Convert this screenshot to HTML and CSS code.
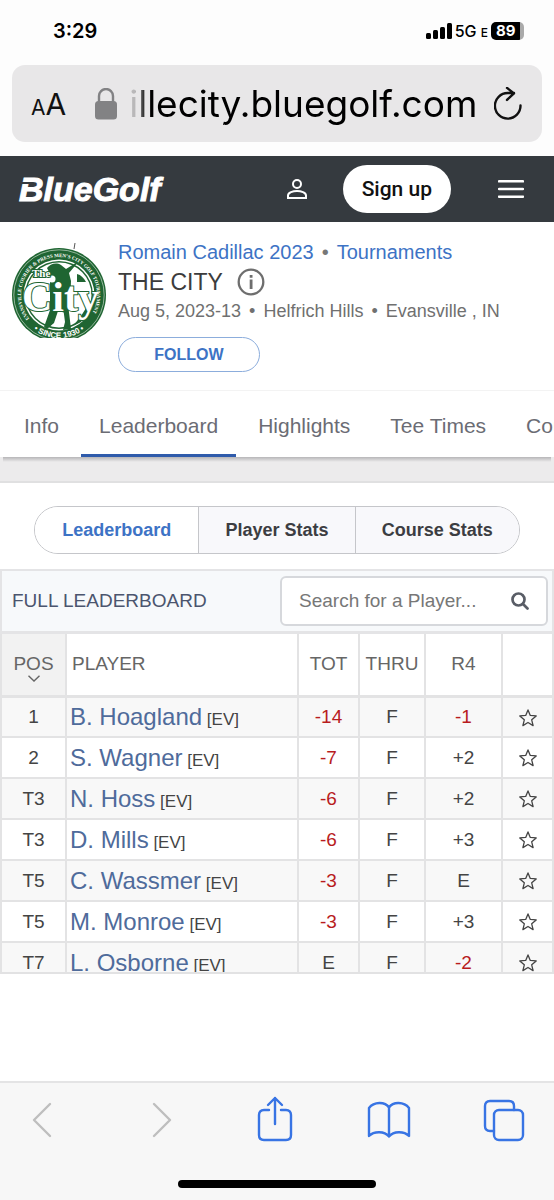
FILE: index.html
```html
<!DOCTYPE html>
<html lang="en">
<head>
<meta charset="utf-8">
<meta name="viewport" content="width=device-width, initial-scale=1">
<title>The City - Leaderboard</title>
<link rel="stylesheet" href="styles.css">
</head>
<body>
<div class="status-bar">
  <time class="clock">3:29</time>
  <div class="status-right">
    <svg class="signal" width="26" height="16" viewBox="0 0 26 16" aria-hidden="true">
      <rect x="0" y="10" width="5" height="6" rx="1.5"/><rect x="7" y="7" width="5" height="9" rx="1.5"/><rect x="14" y="4" width="5" height="12" rx="1.5"/><rect x="21" y="0" width="5" height="16" rx="1.5"/>
    </svg>
    <span class="network">5G <small>E</small></span>
    <span class="battery">89</span>
  </div>
</div>

<form class="address-bar">
  <button class="text-size" type="button" aria-label="Text size"><small>A</small>A</button>
  <svg class="lock" width="22" height="32" viewBox="0 0 22 32" aria-hidden="true">
    <path d="M4 14V8a7 7 0 0 1 14 0v6" fill="none" stroke="#828284" stroke-width="2.4"/>
    <rect x="0" y="13" width="22" height="18.500" rx="3.500" fill="#828284"/>
  </svg>
  <input class="url" type="text" value="illecity.bluegolf.com" aria-label="Address">
  <button class="reload" type="button" aria-label="Reload">
    <svg width="28" height="34" viewBox="0 0 28 34" fill="none" stroke="#111" stroke-width="2.400" stroke-linecap="round" stroke-linejoin="round">
      <path d="M26.500 18.500A12.800 12.800 0 1 1 13.700 6H20M13 .9l7 5.500-7 6.500"/>
    </svg>
  </button>
</form>

<header class="site-header">
  <a class="brand" href="#">BlueGolf</a>
  <button class="icon-button account" type="button" aria-label="Account">
    <svg width="20" height="20" viewBox="0 0 20 20" fill="none" stroke="#fff" stroke-width="2">
      <circle cx="10" cy="5" r="4"/><path d="M1 19v-2.500c0-3 5-4.500 9-4.500s9 1.500 9 4.500V19z"/>
    </svg>
  </button>
  <button class="sign-up" type="button">Sign up</button>
  <button class="icon-button" type="button" aria-label="Menu">
    <svg width="26" height="18" viewBox="0 0 26 18"><path d="M1 1.300h24M1 9h24M1 16.700h24" stroke="#fff" stroke-width="2.500" stroke-linecap="round"/></svg>
  </button>
</header>

<section class="event">
  <svg class="event-logo" width="96" height="96" viewBox="0 0 96 96" role="img" aria-label="The City tournament logo">
    <defs>
      <clipPath id="crop"><rect width="96" height="95"/></clipPath>
      <path id="ring" d="M21 78.700A38 38 0 1 1 75 78.700"/>
      <path id="foot" d="M17.200 82A43 43 0 0 0 78.800 82"/>
    </defs>
    <g clip-path="url(#crop)">
      <path d="M63 6l1-6" stroke="#555" stroke-width="1"/>
      <circle cx="48" cy="52" r="47" fill="#1f6532"/>
      <circle cx="48" cy="52" r="45.200" fill="none" stroke="#c5d9c9" stroke-width=".7"/>
      <circle cx="48" cy="52" r="35.500" fill="#fff"/>
      <circle cx="48" cy="52" r="34" fill="#1f6532"/>
      <circle cx="48" cy="52" r="32.500" fill="#fff"/>
      <path d="M36 25c3-4 9-6 14-3l5 4 13-8-10 12 2 8-1 24-4 8-8-2-4 12-7 6-3-2 6-17V31z" fill="#1f6532"/>
      <path d="M52 64l5-3 3 25-8 1 2-8z" fill="#1f6532"/>
      <path d="M66 31c4 1 7 4 9 8h-9zM70 73l7-11 1 5-8 12-8 4z" fill="#1f6532"/>
      <circle cx="41" cy="36" r="3.500" fill="#fff"/>
      <g class="logo-word"><text x="11" y="68" class="logo-city">City</text><text x="21" y="34" class="logo-the">The</text></g>
      <text class="logo-ring"><textPath href="#ring" startOffset="4">EVANSVILLE COURIER &amp; PRESS MEN’S CITY GOLF TOURNAMENT</textPath></text>
      <text class="logo-foot" text-anchor="middle"><textPath href="#foot" startOffset="50%">• SINCE 1930 •</textPath></text>
    </g>
  </svg>
  <div class="event-info">
    <nav class="crumbs"><a href="#">Romain Cadillac 2023</a><span class="dot">•</span><a href="#">Tournaments</a></nav>
    <div class="event-title">
      <h1>THE CITY</h1>
      <button class="icon-button" type="button" aria-label="Event information">
        <svg width="28" height="28" viewBox="0 0 28 28"><circle cx="14" cy="14" r="12.300" fill="none" stroke="#6e6e6e" stroke-width="2.300"/><path d="M12.700 11.500h2.800V21h-2.800zM12.700 7h2.800v2.800h-2.800z" fill="#6e6e6e"/></svg>
      </button>
    </div>
    <p class="event-meta"><span>Aug 5, 2023-13</span><span class="dot">•</span><span>Helfrich Hills</span><span class="dot">•</span><span>Evansville , IN</span></p>
    <button class="follow" type="button">FOLLOW</button>
  </div>
</section>

<nav class="tabs">
  <a href="#">Info</a>
  <a href="#" class="active" aria-current="page">Leaderboard</a>
  <a href="#">Highlights</a>
  <a href="#">Tee Times</a>
  <a href="#">Course</a>
</nav>
<div class="band"></div>

<main>
  <div class="segments">
    <button type="button" class="selected" aria-pressed="true">Leaderboard</button>
    <button type="button">Player Stats</button>
    <button type="button">Course Stats</button>
  </div>

  <div class="board-head">
    <h2>FULL LEADERBOARD</h2>
    <form class="search">
      <input type="search" placeholder="Search for a Player..." aria-label="Search for a player">
      <button class="icon-button" type="button" aria-label="Search">
        <svg width="18" height="18" viewBox="0 0 18 18" fill="none" stroke="#595d66" stroke-width="2.700" stroke-linecap="round"><circle cx="7.500" cy="7.500" r="6"/><path d="M12 12l4.500 4.500"/></svg>
      </button>
    </form>
  </div>

  <div class="board">
    <svg class="sprite" aria-hidden="true"><symbol id="star" viewBox="0 0 18 18"><path d="M9 .9l2.300 5.500 5.900.5-4.500 3.900 1.400 5.800L9 13.500l-5.100 3.100 1.400-5.800L.8 6.900l5.900-.5z" fill="none" stroke="#444" stroke-width="1.300" stroke-linejoin="round"/></symbol></svg>
    <table>
      <colgroup><col class="c-pos"><col><col class="c-tot"><col class="c-thru"><col class="c-round"><col class="c-star"></colgroup>
      <thead>
        <tr>
          <th class="sorted" scope="col">POS<svg width="12" height="7" viewBox="0 0 12 7" fill="none" stroke="#666" stroke-width="1.400"><path d="M.5.700L6 6 11.500.700"/></svg></th>
          <th class="name" scope="col">PLAYER</th><th scope="col">TOT</th><th scope="col">THRU</th><th scope="col">R4</th><th scope="col" aria-label="Favorite"></th>
        </tr>
      </thead>
      <tbody>
        <tr><td>1</td><td class="name"><a href="#">B. Hoagland</a> [EV]</td><td class="under">-14</td><td>F</td><td class="under">-1</td><td><button class="icon-button" type="button" aria-label="Follow B. Hoagland"><svg width="18" height="18"><use href="#star"/></svg></button></td></tr>
        <tr><td>2</td><td class="name"><a href="#">S. Wagner</a> [EV]</td><td class="under">-7</td><td>F</td><td>+2</td><td><button class="icon-button" type="button" aria-label="Follow S. Wagner"><svg width="18" height="18"><use href="#star"/></svg></button></td></tr>
        <tr><td>T3</td><td class="name"><a href="#">N. Hoss</a> [EV]</td><td class="under">-6</td><td>F</td><td>+2</td><td><button class="icon-button" type="button" aria-label="Follow N. Hoss"><svg width="18" height="18"><use href="#star"/></svg></button></td></tr>
        <tr><td>T3</td><td class="name"><a href="#">D. Mills</a> [EV]</td><td class="under">-6</td><td>F</td><td>+3</td><td><button class="icon-button" type="button" aria-label="Follow D. Mills"><svg width="18" height="18"><use href="#star"/></svg></button></td></tr>
        <tr><td>T5</td><td class="name"><a href="#">C. Wassmer</a> [EV]</td><td class="under">-3</td><td>F</td><td>E</td><td><button class="icon-button" type="button" aria-label="Follow C. Wassmer"><svg width="18" height="18"><use href="#star"/></svg></button></td></tr>
        <tr><td>T5</td><td class="name"><a href="#">M. Monroe</a> [EV]</td><td class="under">-3</td><td>F</td><td>+3</td><td><button class="icon-button" type="button" aria-label="Follow M. Monroe"><svg width="18" height="18"><use href="#star"/></svg></button></td></tr>
        <tr><td>T7</td><td class="name"><a href="#">L. Osborne</a> [EV]</td><td>E</td><td>F</td><td class="under">-2</td><td><button class="icon-button" type="button" aria-label="Follow L. Osborne"><svg width="18" height="18"><use href="#star"/></svg></button></td></tr>
      </tbody>
    </table>
  </div>
</main>

<footer class="toolbar">
  <div class="tools">
    <button class="icon-button" type="button" aria-label="Back" disabled><svg width="44" height="48" viewBox="0 0 44 48"><path d="M30 9L14 25l16 16" stroke="#bebebe"/></svg></button>
    <button class="icon-button" type="button" aria-label="Forward" disabled><svg width="44" height="48" viewBox="0 0 44 48"><path d="M18 9l16 16-16 16" stroke="#bebebe"/></svg></button>
    <button class="icon-button" type="button" aria-label="Share"><svg width="44" height="48" viewBox="0 0 44 48"><path d="M18 15h-5q-5 0-5 5v20q0 5 5 5h22q5 0 5-5V20q0-5-5-5h-5M24 29V3M17 10l7-7 7 7"/></svg></button>
    <button class="icon-button" type="button" aria-label="Bookmarks"><svg width="44" height="48" viewBox="0 0 44 48"><path d="M22 12.500v29M22 12.500C18 6.500 7 6.500 2 13v28c5-5 15.500-5 20 .500C26.500 36 37 36 42 41V13C37 6.500 26 6.500 22 12.500z"/></svg></button>
    <button class="icon-button" type="button" aria-label="Tabs"><svg width="44" height="48" viewBox="0 0 44 48"><rect x="12" y="15" width="29" height="30" rx="5"/><path d="M12 36H8q-5 0-5-5V11q0-5 5-5h19q5 0 5 5v4"/></svg></button>
  </div>
  <div class="home-indicator"></div>
</footer>
</body>
</html>
```

FILE: styles.css
```css
* { box-sizing: border-box; }

body {
  margin: 0;
  min-height: 100vh;
  display: flex;
  flex-direction: column;
  overflow-x: hidden;
  background: #fdfdfd;
  color: #444;
  font-family: "Liberation Sans", Arial, sans-serif;
}

button { font: inherit; color: inherit; cursor: pointer; }
a { color: inherit; text-decoration: none; }

.icon-button {
  display: inline-flex;
  padding: 0;
  border: 0;
  background: none;
}

/* Device status */
.status-bar {
  display: flex;
  justify-content: space-between;
  align-items: center;
  height: 65px;
  padding: 0 30px 4px 53px;
  color: #000;
  font-family: Inter, sans-serif;
}
.clock { font-size: 20px; font-weight: 600; }
.status-right { display: flex; align-items: center; gap: 3px; }
.network { font-size: 16px; font-weight: 500; }
.network small { font-size: 12px; }
.battery {
  width: 33px;
  padding-left: 5px;
  border-radius: 5px;
  background: linear-gradient(90deg, #000 29px, #aaa 29px);
  color: #fff;
  font-size: 15px;
  font-weight: 700;
  line-height: 18px;
}

/* Address bar */
.address-bar {
  display: flex;
  align-items: center;
  height: 77px;
  margin: 0 12px 14px;
  padding: 0 20px 0 19px;
  border-radius: 13px;
  background: #e8e7e8;
}
.text-size, .reload { border: 0; padding: 0; background: none; color: #111; }
.text-size { padding-top: 4px; font-family: Inter, sans-serif; font-size: 30px; line-height: 36px; white-space: nowrap; }
.text-size small { font-size: 21px; }
.lock { flex: none; margin-left: 29px; }
.url {
  flex: 1;
  min-width: 0;
  margin: 0 12px 0 12px;
  padding: 0;
  border: 0;
  background: none;
  color: #000;
  font-family: Inter, sans-serif;
  font-size: 37px;
  line-height: 48px;
  mask-image: linear-gradient(90deg, rgba(0, 0, 0, .2) 6px, #000 18px);
}
.reload { display: flex; }

/* Site header */
.site-header {
  display: flex;
  align-items: center;
  height: 66px;
  padding: 0 30px 0 19px;
  background: #353a3f;
  color: #fff;
}
.brand {
  position: relative;
  margin-right: auto;
  font-size: 34px;
  font-style: italic;
  font-weight: 700;
  line-height: 40px;
  -webkit-text-stroke: 1px #fff;
}
.brand::before {
  content: "";
  position: absolute;
  left: 0;
  top: 13px;
  width: 11px;
  height: 2px;
  background: #353a3f;
}
.account { margin-right: 36px; }
.sign-up {
  height: 48px;
  margin-right: 47px;
  padding: 0 19px;
  border: 0;
  border-radius: 24px;
  background: #fff;
  color: #111;
  font-family: Roboto, sans-serif;
  font-size: 21px;
  font-weight: 500;
}

/* Event summary */
.event {
  display: flex;
  gap: 11px;
  padding: 18px 11px;
  border-bottom: 1px solid #f3f3f3;
  background: #fff;
}
.event-logo { flex: none; margin-top: 3px; }
.logo-ring, .logo-foot { fill: #fff; font-weight: 700; }
.logo-ring { font-family: "Liberation Serif", serif; font-size: 5px; }
.logo-foot { font-size: 8px; }
.logo-word {
  fill: #fff;
  stroke: #1f6532;
  stroke-width: 2px;
  paint-order: stroke;
  font-family: "Liberation Serif", serif;
  font-weight: 700;
}
.logo-the { font-size: 11px; }
.logo-city { font-size: 42px; }
.event-info { color: #707070; white-space: nowrap; }
.crumbs { color: #777; font-size: 20px; line-height: 24px; }
.crumbs a { color: #3d73c5; }
.dot { margin: 0 8px; }
.event-title { display: flex; align-items: center; gap: 14px; height: 36px; }
h1 { margin: 0; color: #3c3c3c; font-size: 23px; font-weight: 400; }
.event-meta { margin: 0; font-size: 18px; line-height: 23px; }
.follow {
  width: 142px;
  height: 35px;
  margin-top: 14px;
  border: 1px solid #8caddc;
  border-radius: 18px;
  background: #fff;
  color: #3d73c5;
  font-size: 16px;
  font-weight: 700;
}

/* Page tabs */
.tabs {
  display: flex;
  gap: 4px;
  overflow: hidden;
  padding-left: 6px;
  background: #fff;
  color: #6b6c74;
  font-size: 21px;
  white-space: nowrap;
}
.tabs a {
  height: 66px;
  padding: 2px 18px 0;
  border-bottom: 3px solid transparent;
  line-height: 66px;
}
.tabs .active { border-color: #2f5bab; }
.band {
  height: 26px;
  overflow: hidden;
  background: #ecebec;
  border-bottom: 2px solid #e0e0e1;
}
.band::before {
  content: "";
  display: block;
  height: 5px;
  margin: 0 3px;
  background: linear-gradient(#b7b6b8, #ecebec);
}

/* Leaderboard */
main { flex: 1; background: #fff; }
.segments {
  display: flex;
  margin: 23px 34px 15px;
  border: 1px solid #c5c6ca;
  border-radius: 24px;
  overflow: hidden;
}
.segments button {
  flex: 164;
  height: 46px;
  padding: 0;
  border: 0;
  background: #f8f8fb;
  color: #3c3d42;
  font-size: 18px;
  font-weight: 700;
}
.segments button + button { flex: 156; border-left: 1px solid #c5c6ca; }
.segments button:last-child { flex: 164; }
.segments .selected { background: #fff; color: #3d73c5; }

.board-head {
  display: flex;
  justify-content: space-between;
  align-items: center;
  padding: 5px 4px 5px 10px;
  border: 2px solid #e4e4e6;
  border-bottom-width: 3px;
  background: #f7f9fb;
}
h2 { margin: 0; color: #4b556e; font-size: 19px; font-weight: 400; }
.search {
  display: flex;
  align-items: center;
  flex: 0 1 268px;
  min-width: 0;
  height: 50px;
  padding: 0 17px;
  border: 2px solid #d6d8dc;
  border-radius: 6px;
  background: #fff;
}
.search input {
  flex: 1;
  min-width: 0;
  padding: 0;
  border: 0;
  background: none;
  font: inherit;
  font-size: 19px;
}
.search input::placeholder { color: #777; }

.board {
  height: 340px;
  overflow: hidden;
  border-bottom: 2px solid #e2e2e3;
}
.sprite { display: none; }
table { width: 100%; table-layout: fixed; border-collapse: collapse; font-size: 19px; }
.c-pos { width: 65px; }
.c-tot { width: 61px; }
.c-thru { width: 66px; }
.c-round { width: 77px; }
.c-star { width: 51px; }
th, td { padding: 0; border: 2px solid #e3e3e4; text-align: center; }
th {
  position: relative;
  height: 62px;
  border-top: 0;
  border-bottom-width: 3px;
  color: #666;
  font-weight: 400;
}
th svg { position: absolute; left: 50%; bottom: 13px; margin-left: -6px; }
.sorted { background: #f2f2f2; }
td { height: 41px; }
tbody tr:nth-child(odd) { background: #f8f8f8; }
.name { padding-left: 5px; text-align: left; white-space: nowrap; }
td.name { padding-left: 3px; font-size: 17px; }
td.name a { color: #4f6b9b; font-size: 24px; }
.under { color: #b81c1e; }
td .icon-button { vertical-align: middle; }

/* Browser toolbar */
.toolbar {
  height: 119px;
  border-top: 2px solid #e4e4e5;
  background: #f7f7f7;
}
.tools { display: flex; justify-content: space-between; padding: 12px 28px 0 20px; }
.tools svg { fill: none; stroke: #3874e4; stroke-width: 2.4px; stroke-linecap: round; stroke-linejoin: round; }
.home-indicator { width: 198px; height: 8px; margin: 37px auto 0; border-radius: 4px; background: #000; }
```
